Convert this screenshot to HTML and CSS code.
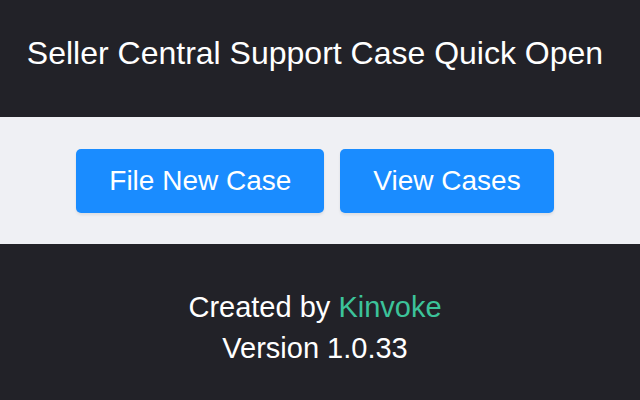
FILE: index.html
```html
<!DOCTYPE html>
<html>
<head>
<meta charset="utf-8">
<link rel="stylesheet" href="styles.css">
</head>
<body>
<div class="page">
  <header class="header">
    <h1 class="title">Seller Central Support Case Quick Open</h1>
  </header>
  <section class="actions">
    <button class="btn">File New Case</button>
    <button class="btn">View Cases</button>
  </section>
  <footer class="footer">
    <p class="line">Created by <a class="brand" href="#">Kinvoke</a></p>
    <p class="line">Version 1.0.33</p>
  </footer>
</div>
</body>
</html>
```
FILE: styles.css
```css
html, body {
  margin: 0;
  padding: 0;
  background: #222228;
  height: 100%;
}
.page {
  width: 640px;
  font-family: "Liberation Sans", Arial, sans-serif;
  color: #ffffff;
}
.header {
  height: 117px;
  display: flex;
  justify-content: center;
  padding: 33px 10px 0 0;
  box-sizing: border-box;
}
.title {
  margin: 0;
  font-size: 32px;
  font-weight: 400;
  line-height: 40px;
  white-space: nowrap;
}
.actions {
  height: 127px;
  background: #eff0f4;
  display: flex;
  justify-content: center;
  align-items: center;
  gap: 16px;
  padding-right: 10px;
}
.btn {
  font-family: inherit;
  font-size: 28px;
  color: #ffffff;
  background: #1a8cff;
  border: none;
  border-radius: 5px;
  height: 64px;
  padding: 0 33px;
  box-shadow: 0 2px 3px rgba(0,0,0,0.08);
}
.footer {
  padding: 43px 10px 0 0;
  text-align: center;
}
.line {
  margin: 0;
  font-size: 29px;
  line-height: 41px;
}
.brand {
  color: #3cc39a;
  text-decoration: none;
}
```
